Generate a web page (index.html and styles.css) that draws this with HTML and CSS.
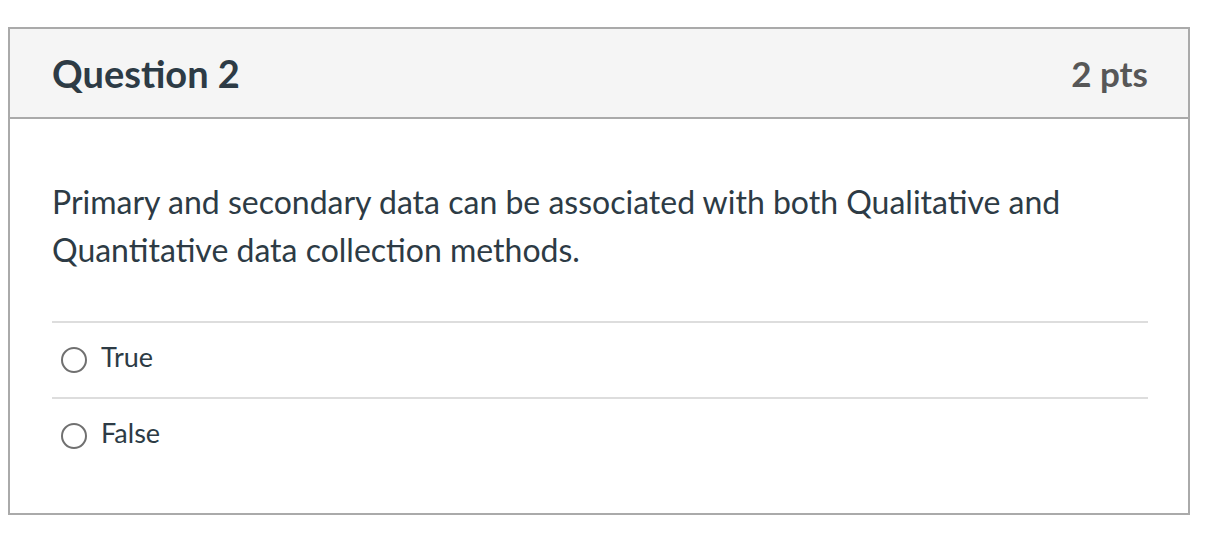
FILE: index.html
```html
<!DOCTYPE html>
<html>
<head>
<meta charset="utf-8">
<link rel="stylesheet" href="styles.css">
</head>
<body>
<div class="question">
  <div class="header">
    <h2 class="title">Question 2</h2>
    <div class="pts">2 pts</div>
  </div>
  <div class="content">
    <p class="text">Primary and secondary data can be associated with both Qualitative and Quantitative data collection methods.</p>
    <div class="answers">
      <div class="answer">
        <span class="radio"></span>
        <span class="label">True</span>
      </div>
      <div class="answer">
        <span class="radio"></span>
        <span class="label">False</span>
      </div>
    </div>
  </div>
</div>
</body>
</html>
```
FILE: styles.css
```css
html, body {
  margin: 0;
  padding: 0;
  background: #fff;
}
body {
  font-family: Lato, "Open Sans", sans-serif;
  color: #2d3b45;
  padding: 27px 30px 0 8px;
}
.question {
  width: 1178px;
  border: 2px solid #aaaaaa;
}
.header {
  background: #f5f5f5;
  border-bottom: 2px solid #aaaaaa;
  height: 88px;
  display: flex;
  align-items: center;
  justify-content: space-between;
  padding: 0 40px 0 42px;
}
.title {
  margin: 0;
  font-size: 38px;
  font-weight: 700;
  color: #2d3b45;
}
.pts {
  font-size: 35px;
  font-weight: 700;
  color: #575757;
}
.content {
  padding: 59px 40px 40px 42px;
}
.text {
  margin: 0 0 47px;
  font-size: 32px;
  line-height: 48px;
}
.answers {
  border-top: 2px solid #dddddd;
}
.answer {
  display: flex;
  align-items: center;
  height: 74px;
  border-bottom: 2px solid #dddddd;
}
.answer:last-child {
  border-bottom: none;
}
.radio {
  width: 22px;
  height: 22px;
  border: 2px solid #707070;
  border-radius: 50%;
  margin: 0 14px 0 9px;
}
.label {
  font-size: 27px;
  margin-bottom: 8px;
}
```
